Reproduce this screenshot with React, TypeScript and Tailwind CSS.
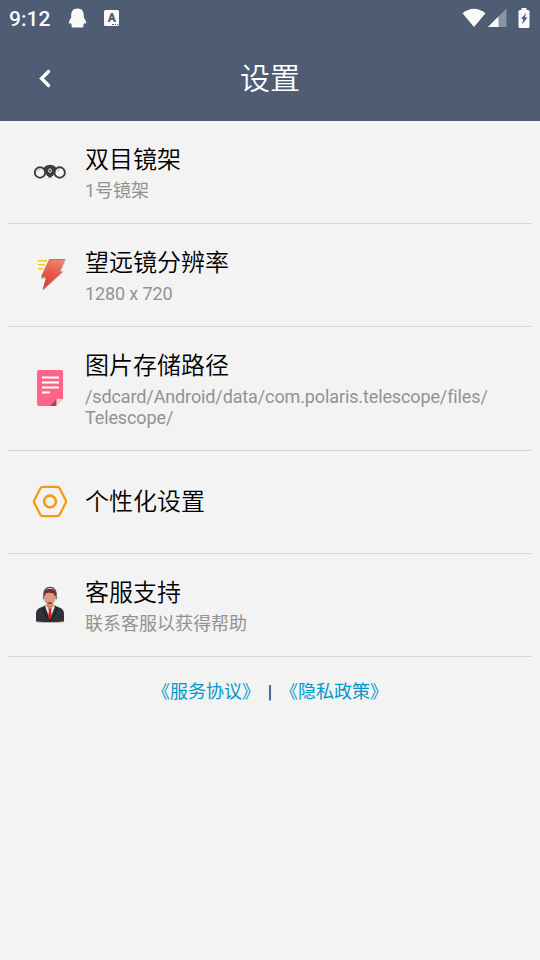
import type { ReactNode } from 'react'
import { clsx } from 'clsx'

interface SettingItem {
    title: string
    summary?: string
    tight?: boolean
    icon: ReactNode
}

function BinocularsIcon() {
    return (
        <svg width="36" height="20" viewBox="0 0 36 20" fill="none">
            <path d="M10.500 6.500 12.500 5l2-1.500L18 2.700l3.500.8 2 1.500 2 1.500-2 6h-2.300v1.500h-1.400V15.500h-3.600V14h-1.400v-1.500h-2.300z" fill="#3d3d3d" />
            <circle cx="8" cy="10.500" r="5.200" fill="#f5f5f5" stroke="#3d3d3d" strokeWidth="1.900" />
            <circle cx="27.700" cy="10.500" r="5.200" fill="#f5f5f5" stroke="#3d3d3d" strokeWidth="1.900" />
            <path d="M5.500 9.500 7.700 7.500M25.200 9.500l2.200-2" stroke="#9a9a9a" />
            <ellipse cx="18" cy="8.700" rx="1.400" ry="1.800" fill="#3d3d3d" stroke="#eeeeee" />
        </svg>
    )
}

function LightningIcon() {
    return (
        <svg width="36" height="40" viewBox="0 0 36 40" fill="none">
            <defs>
                <linearGradient id="bolt" x1="22" y1="4" x2="16" y2="34" gradientUnits="userSpaceOnUse">
                    <stop stopColor="#ee8270" />
                    <stop offset="0.500" stopColor="#e45846" />
                    <stop offset="1" stopColor="#cf3f32" />
                </linearGradient>
            </defs>
            <path d="M6 6.500h9M6 10.500h7M6 14.500h5" stroke="#dedede" />
            <path d="M6 5.500h9M6 9.500h7M6 13.500h5" stroke="#f5c431" />
            <path d="M17 4h17l-5 12.500h3L11 36l3-12H9z" fill="#bcbcbc" opacity="0.700" />
            <path d="M17.500 4h16L28 16.500h3L10.500 35l3.500-12.500H9z" fill="url(#bolt)" />
            <path d="m9.500 21 8.300-16.500H33" stroke="#c9685c" strokeWidth="0.800" />
        </svg>
    )
}

function DocumentIcon() {
    return (
        <svg className="-mt-[2px]" width="28" height="38" viewBox="0 0 28 38">
            <path d="M1 3a2 2 0 0 1 2-2h22a2 2 0 0 1 2 2v27l-7 7H3a2 2 0 0 1-2-2z" fill="#fd6488" />
            <path d="M14 37l6.500-7v7z" fill="#a6425c" />
            <path d="M20.500 30H27l-6.500 7z" fill="#e3d7d9" />
            <path d="M6 8.500h17M6 13.500h17M6 18.500h17M6 23.500h8" stroke="#fff" strokeWidth="2" />
        </svg>
    )
}

function NutIcon() {
    return (
        <svg width="36" height="36" viewBox="0 0 36 36" fill="none" stroke="#f59b13">
            <path
                d="M11 2.800h14q1.800 0 2.600 1.400l6 11.700q.8 1.600 0 3.200l-6 11.700q-.8 1.400-2.600 1.400H11q-1.800 0-2.600-1.400l-6-11.700q-.8-1.600 0-3.200l6-11.700q.8-1.400 2.600-1.400z"
                strokeWidth="2.300"
            />
            <circle cx="18" cy="17.500" r="5.900" strokeWidth="2.600" />
        </svg>
    )
}

function SupportIcon() {
    return (
        <svg width="36" height="38" viewBox="0 0 36 40" preserveAspectRatio="none">
            <ellipse cx="18" cy="37.600" rx="14.500" ry="1.200" fill="#a0a0a0" />
            <path d="M4 37v-8q0-4 4-6l6-2.500h8l6 2.500q4 2 4 6v8q-14 2-28 0z" fill="#303238" />
            <path d="m13 21 5 14 5-14-5-3z" fill="#e9e9ee" />
            <path d="M16.200 23.500h3.600l-.8 2.500 1.200 8-2.200 3-2.200-3L17 26z" fill="#cd1c25" />
            <path d="m13 20.500-2.500 4 2 2-.5 1.500 6 9M23 20.500l2.500 4-2 2 .5 1.500-6 9" fill="none" stroke="#111319" />
            <path d="M14.500 17h7v4.500L18 24l-3.500-2.500z" fill="#cf8267" />
            <path d="M12.500 7.500q5.500-5 11 0v6q-.5 5-5.500 7-5-2-5.500-7z" fill="#df9a80" />
            <path d="M12 10.500q-1-7.500 6-7.500t6 7.500l-1.300.5-.8-3-4.900-1-3.500.5-.3 3z" fill="#742e26" />
            <path d="M11.700 10.500Q11.500 1.500 18 1.500t6.300 9" fill="none" stroke="#55494a" strokeWidth="1.200" />
            <path d="M11.700 9.500v4.500M24.300 9.500v4.500" stroke="#77797f" strokeWidth="1.600" />
            <path d="M12 14q1 4 5.500 4" fill="none" stroke="#a8735f" strokeWidth="0.800" />
            <path d="M16.500 18h3" stroke="#40302f" strokeWidth="1.600" />
        </svg>
    )
}

const items: SettingItem[] = [
    { title: '双目镜架', summary: '1号镜架', icon: <BinocularsIcon /> },
    { title: '望远镜分辨率', summary: '1280 x 720', tight: true, icon: <LightningIcon /> },
    {
        title: '图片存储路径',
        summary: '/sdcard/Android/data/com.polaris.telescope/files/Telescope/',
        tight: true,
        icon: <DocumentIcon />,
    },
    { title: '个性化设置', icon: <NutIcon /> },
    { title: '客服支持', summary: '联系客服以获得帮助', icon: <SupportIcon /> },
]

function StatusBar() {
    return (
        <div className="flex h-9 items-center pl-[9px] pr-[10px] text-[#fafafa]">
            <span className="pt-px text-[21px] leading-9 font-medium">9:12</span>
            <svg className="ml-[18px]" width="19" height="20" viewBox="0 0 19 20" fill="currentColor">
                <path d="M9.500.5c4.200 0 6.300 2.800 6.300 6.500v2.500c1 1.700 2.200 3.400 2.400 5 .1 1.200-.7 1.500-1.700.2-.4 1-.9 1.900-1.600 2.600 1 .5 1 2.200-.9 2.200H5c-1.900 0-1.900-1.700-.9-2.200-.7-.7-1.200-1.600-1.600-2.600-1 1.300-1.800 1-1.700-.2.200-1.600 1.400-3.300 2.400-5V7C3.200 3.300 5.300.5 9.500.5z" />
            </svg>
            <div className="relative ml-[17px] flex h-4 w-[15px] justify-center rounded-[1.5px] bg-[#fafafa] text-[12px] leading-[16px] font-black text-[#4e5d73]">
                A
                <span className="absolute right-[1px] bottom-px h-px w-[6px] border-t border-dotted border-[#4e5d73]" />
            </div>
            <div className="ml-auto flex items-center">
                <svg width="24" height="20" viewBox="0 0 24 20" fill="currentColor">
                    <path d="M.5 5.300Q12-3.700 23.500 5.300L12 19z" />
                </svg>
                <svg className="ml-[2px]" width="19" height="20" viewBox="0 0 19 20" fill="currentColor">
                    <path d="M0 19 18.500.5V19z" opacity="0.350" />
                    <path d="M0 19 10.500 8.500V19z" />
                </svg>
                <svg className="ml-[11px]" width="12" height="20" viewBox="0 0 12 20">
                    <path d="M3.500 0h5v2H10a1.500 1.500 0 0 1 1.500 1.500v15A1.500 1.500 0 0 1 10 20H2A1.500 1.500 0 0 1 .5 18.500v-15A1.500 1.500 0 0 1 2 2h1.500z" fill="currentColor" />
                    <path d="M8 5 3 11h2.500L4 16.500l5.500-7H7z" fill="#4e5d73" />
                </svg>
            </div>
        </div>
    )
}

export default function App() {
    return (
        <div className="flex h-screen flex-col bg-[#f3f3f3] font-['Roboto','Noto_Sans_CJK_SC',sans-serif]">
            <header className="h-[121px] shrink-0 bg-[#4e5d73]">
                <StatusBar />
                <div className="grid h-[85px] grid-cols-[90px_1fr_90px] items-center text-white">
                    <button className="flex justify-center">
                        <svg width="14" height="20" viewBox="0 0 14 20" fill="none">
                            <path d="M10.500 2.500 3.500 9.500l7 7" stroke="currentColor" strokeWidth="3.300" strokeLinecap="round" />
                        </svg>
                    </button>
                    <h1 className="text-center text-[30px] leading-10 font-[350]">设置</h1>
                </div>
            </header>

            <main className="px-2">
                {items.map((item) => (
                    <div
                        key={item.title}
                        className="flex min-h-[103px] items-center border-b border-[#d4d4d4] py-[21px]"
                    >
                        <div className="flex w-[77px] shrink-0 justify-center pl-[7px]">{item.icon}</div>
                        <div className="min-w-0 flex-1 pr-10">
                            <h2 className="text-2xl leading-[36px] font-[350] text-black">{item.title}</h2>
                            {item.summary && (
                                <p
                                    className={clsx(
                                        'pt-[2px] pb-px text-lg leading-[21px] wrap-anywhere text-[#929292]',
                                        item.tight && 'tracking-[-0.12px]'
                                    )}
                                >
                                    {item.summary}
                                </p>
                            )}
                        </div>
                    </div>
                ))}
            </main>

            <footer className="flex h-[70px] items-center justify-center text-lg text-[#0099cc]">
                <a className="[font-feature-settings:'halt']">《服务协议》</a>
                <span className="w-[38px] text-center text-[#222]">|</span>
                <a className="[font-feature-settings:'halt']">《隐私政策》</a>
            </footer>
        </div>
    )
}
